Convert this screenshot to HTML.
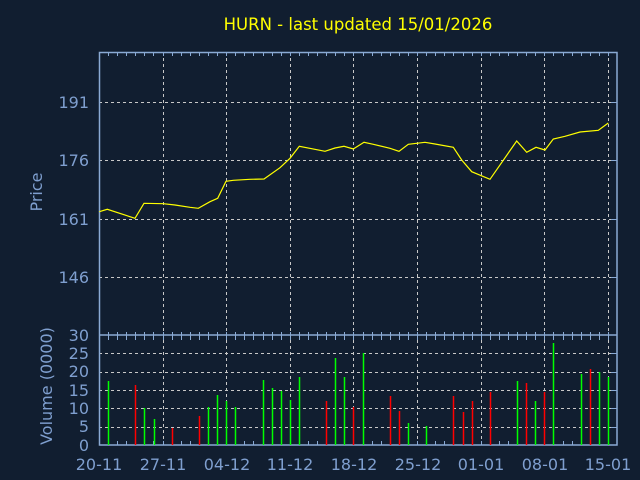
<!DOCTYPE html>
<html><head><style>
html,body{margin:0;padding:0;background:#111e30;}
svg{display:block;}
text{font-family:"DejaVu Sans","Liberation Sans",sans-serif;}
</style></head><body>
<svg width="640" height="480" viewBox="0 0 640 480" xmlns="http://www.w3.org/2000/svg">
<rect width="640" height="480" fill="#111e30"/>
<text x="358" y="30" fill="#ffff00" font-size="16.5" text-anchor="middle">HURN - last updated 15/01/2026</text>
<g stroke="#c8c8c8" stroke-width="1" stroke-dasharray="3,3" fill="none">
<path d="M99 102.5H617M99 160.5H617M99 219.5H617M99 277.5H617"/>
<path d="M99 353.5H617M99 372.5H617M99 390.5H617M99 408.5H617M99 427.5H617"/>
<path d="M163.5 52V445M226.5 52V445M290.5 52V445M353.5 52V445M417.5 52V445M481.5 52V445M544.5 52V445M608.5 52V445"/>
</g>
<g stroke="#8aaad4" stroke-width="1.5" fill="none">
<rect x="99.5" y="52.5" width="517.5" height="392.5"/>
<path d="M99 335H617"/>
</g>
<g stroke="#8aaad4" stroke-width="1" fill="none">
<path id="t" d="M108.5 52v4M117.5 52v4M126.5 52v4M135.5 52v4M144.5 52v4M153.5 52v4M163.5 52v4M172.5 52v4M181.5 52v4M190.5 52v4M199.5 52v4M208.5 52v4M217.5 52v4M226.5 52v4M235.5 52v4M244.5 52v4M253.5 52v4M263.5 52v4M272.5 52v4M281.5 52v4M290.5 52v4M299.5 52v4M308.5 52v4M317.5 52v4M326.5 52v4M335.5 52v4M344.5 52v4M353.5 52v4M363.5 52v4M372.5 52v4M381.5 52v4M390.5 52v4M399.5 52v4M408.5 52v4M417.5 52v4M426.5 52v4M435.5 52v4M444.5 52v4M453.5 52v4M463.5 52v4M472.5 52v4M481.5 52v4M490.5 52v4M499.5 52v4M508.5 52v4M517.5 52v4M526.5 52v4M535.5 52v4M544.5 52v4M553.5 52v4M563.5 52v4M572.5 52v4M581.5 52v4M590.5 52v4M599.5 52v4M608.5 52v4"/>
<use href="#t" y="280"/>
<use href="#t" y="284"/>
<use href="#t" y="389"/>
<path d="M611 102.5h6M611 160.5h6M611 219.5h6M611 277.5h6M611 353.5h6M611 372.5h6M611 390.5h6M611 408.5h6M611 427.5h6"/>
</g>
<polyline fill="none" stroke="#ffff00" stroke-width="1.2" points="99.3,211.7 107.3,209.3 135,218.3 144,203.3 163.3,203.7 175,205 190,207.3 198.3,208.3 210,201.7 217.7,198.3 226,181.3 233.3,180.3 250,179.3 264,179 280,167.7 290,158.3 299.3,146.3 320,150.3 325,151.3 335,148 344,146.3 353.3,149 364,142.3 373.3,144.3 390,148.3 399,151.3 408.3,144.3 425,142.3 435,144 453.3,147.3 461.7,160 471.7,171.7 490,179.3 516.7,141 526.7,152.3 536,147.3 545,150 553.3,139 565,136.3 580,132 598.3,130.3 608.3,123"/>
<g stroke-width="1.5">
<g stroke="#00ff00">
<path d="M108.5 381V445M144.5 408V445M154.5 419V445M208.5 407V445M217.5 395V445M226.5 401V445M235.5 407V445M263.5 380V445M272.5 388V445M281.5 391V445M290.5 400V445M299.5 377V445M335.5 358V445M344.5 377V445M363.5 353V445M408.5 423V445M426.5 426V445M517.5 381V445M535.5 401V445M553.5 343V445M581.5 374V445M599.5 372V445M608.5 377V445"/>
</g>
<g stroke="#ff0000">
<path d="M135.5 385V445M172.5 428V445M199.5 416V445M326.5 401V445M353.5 407V445M390.5 396V445M399.5 411V445M453.5 396V445M463.5 412V445M472.5 401V445M490.5 392V445M526.5 383V445M544.5 392V445M590.5 369V445"/>
</g>
</g>
<g fill="#7f9fcf" font-size="16" text-anchor="end">
<text x="89" y="108">191</text>
<text x="89" y="166">176</text>
<text x="89" y="225">161</text>
<text x="89" y="283">146</text>
<text x="89" y="341">30</text>
<text x="89" y="359">25</text>
<text x="89" y="377">20</text>
<text x="89" y="396">15</text>
<text x="89" y="414">10</text>
<text x="89" y="432">5</text>
<text x="89" y="451">0</text>
</g>
<g fill="#7f9fcf" font-size="16" text-anchor="middle">
<text transform="translate(42,192) rotate(-90)">Price</text>
<text transform="translate(52,386) rotate(-90)">Volume (0000)</text>
<text x="99" y="470">20-11</text>
<text x="163" y="470">27-11</text>
<text x="227" y="470">04-12</text>
<text x="290" y="470">11-12</text>
<text x="354" y="470">18-12</text>
<text x="418" y="470">25-12</text>
<text x="481" y="470">01-01</text>
<text x="545" y="470">08-01</text>
<text x="608" y="470">15-01</text>
</g>
</svg>
</body></html>
